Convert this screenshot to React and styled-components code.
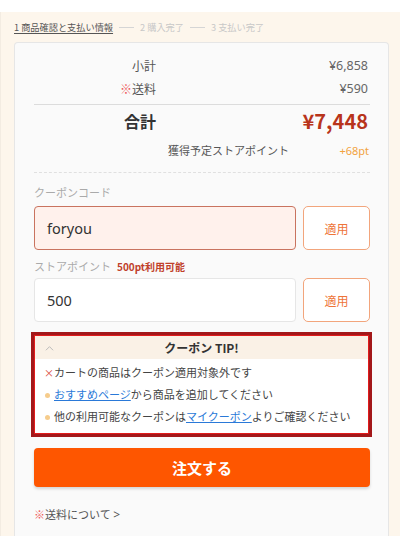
import React from "react";
import styled, { createGlobalStyle } from "styled-components";

const GlobalStyle = createGlobalStyle`
  html, body { margin: 0; padding: 0; background: #fff; }
  body { font-family: "Noto Sans CJK JP", "Noto Sans", sans-serif; color: #444; }
  * { box-sizing: border-box; }
`;

/* Checkout summary panel */
const App = () => {
  return <>
    <GlobalStyle />
    <Page>
      <Steps>
        <StepActive>1 商品確認と支払い情報</StepActive>
        <StepLine />
        <Step>2 購入完了</Step>
        <StepLine />
        <Step>3 支払い完了</Step>
      </Steps>
      <Card>
        <SumRow>
          <SumLabel>小計</SumLabel>
          <SumValue>¥6,858</SumValue>
        </SumRow>
        <SumRow>
          <SumLabel><Mark>※</Mark>送料</SumLabel>
          <SumValue>¥590</SumValue>
        </SumRow>
        <Divider />
        <TotalRow>
          <TotalLabel>合計</TotalLabel>
          <TotalValue>¥7,448</TotalValue>
        </TotalRow>
        <PointRow>
          <span>獲得予定ストアポイント</span>
          <PointValue>+68pt</PointValue>
        </PointRow>
        <Dashed />
        <FieldLabel>クーポンコード</FieldLabel>
        <FieldRow>
          <Input isError>foryou</Input>
          <ApplyButton>適用</ApplyButton>
        </FieldRow>
        <FieldLabel $tight>ストアポイント<Available>500pt利用可能</Available></FieldLabel>
        <FieldRow>
          <Input>500</Input>
          <ApplyButton>適用</ApplyButton>
        </FieldRow>
        <TipBox>
          <TipHeader>
            <Caret viewBox="0 0 10 6" width="9" height="6">
              <path d="M1 5.5 L5 1.5 L9 5.5" fill="none" stroke="#bbb" strokeWidth="1.1" />
            </Caret>
            クーポン TIP!
          </TipHeader>
          <TipList>
            <TipItem><Cross>×</Cross>カートの商品はクーポン適用対象外です</TipItem>
            <TipItem><Dot /><TipLink>おすすめページ</TipLink>から商品を追加してください</TipItem>
            <TipItem><Dot />他の利用可能なクーポンは<TipLink>マイクーポン</TipLink>よりご確認ください</TipItem>
          </TipList>
        </TipBox>
        <OrderButton>注文する</OrderButton>
        <Footnote><Mark>※</Mark>送料について <Arrow>&gt;</Arrow></Footnote>
      </Card>
    </Page>
  </>;
};

const Page = styled.div`
  margin-top: 12px;
  height: 524px;
  background: #fdf6ec;
  border-left: 1px solid #f3ece2;
  padding: 0 11px 0 13px;
  display: flex;
  flex-direction: column;
  overflow: hidden;
`;
const Steps = styled.div`
  height: 30px;
  display: flex;
  align-items: center;
  gap: 6px;
  font-size: 9.2px;
  color: #c8c8c8;
`;
const StepActive = styled.span`
  color: #555;
  text-decoration: underline;
  text-underline-offset: 2px;
`;
const Step = styled.span``;
const StepLine = styled.span`
  width: 15px;
  height: 1px;
  background: #d5d5d5;
`;
const Card = styled.div`
  flex: 1;
  background: #fafafa;
  border: 1px solid #e6e6e6;
  border-bottom: none;
  border-radius: 4px 4px 0 0;
  padding: 11px 18px 0 19px;
  display: flex;
  flex-direction: column;
`;
const SumRow = styled.div`
  height: 23px;
  display: flex;
  align-items: center;
  font-size: 12px;
  color: #555;
`;
const SumLabel = styled.span`
  width: 122px;
  text-align: right;
`;
const SumValue = styled.span`
  flex: 1;
  text-align: right;
  padding-right: 2px;
  font-family: "Noto Sans", sans-serif;
  font-size: 12.5px;
  color: #666;
`;
const Mark = styled.span`
  color: #ee5b5b;
`;
const Divider = styled.div`
  margin-top: 4px;
  height: 1px;
  background: #dcdcdc;
`;
const TotalRow = styled.div`
  height: 31px;
  display: flex;
  align-items: center;
`;
const TotalLabel = styled.span`
  width: 122px;
  text-align: right;
  font-size: 16px;
  font-weight: 700;
  color: #333;
`;
const TotalValue = styled.span`
  flex: 1;
  text-align: right;
  padding-right: 2px;
  font-size: 20px;
  font-weight: 700;
  color: #b8341b;
`;
const PointRow = styled.div`
  height: 28px;
  display: flex;
  align-items: center;
  justify-content: space-between;
  padding-left: 134px;
  padding-right: 1px;
  font-size: 11px;
  color: #555;
`;
const PointValue = styled.span`
  font-family: "Noto Sans", sans-serif;
  color: #f2a33e;
`;
const Dashed = styled.div`
  margin-top: 8px;
  border-top: 1px dashed #e0e0e0;
`;
const FieldLabel = styled.div`
  margin-top: ${(p) => p.$tight ? "9px" : "12px"};
  margin-bottom: ${(p) => p.$tight ? "5px" : "7px"};
  height: 14px;
  display: flex;
  align-items: center;
  font-size: 11px;
  color: #aaa;
`;
const Available = styled.span`
  margin-left: 6px;
  font-size: 10px;
  font-weight: 700;
  color: #c0402a;
`;
const FieldRow = styled.div`
  display: flex;
  gap: 7px;
`;
const Input = styled.div`
  flex: 1;
  height: 44px;
  display: flex;
  align-items: center;
  padding-left: 12px;
  font-family: "Noto Sans", sans-serif;
  font-size: 14.5px;
  color: #333;
  background: ${(p) => p.isError ? "#fff1ec" : "#fff"};
  border: 1px solid ${(p) => p.isError ? "#c9735f" : "#e6e6e6"};
  border-radius: 4px;
`;
const ApplyButton = styled.div`
  width: 67px;
  height: 44px;
  display: flex;
  align-items: center;
  justify-content: center;
  font-size: 12px;
  color: #ee7438;
  background: #fff;
  border: 1px solid #f2a57c;
  border-radius: 5px;
`;
const TipBox = styled.div`
  margin: 10px -2px 0 -3px;
  border: 3px solid #a3181a;
  box-shadow: inset 0 0 0 1px #e21b1b;
  background: #fff;
  padding: 1px;
`;
const TipHeader = styled.div`
  position: relative;
  height: 23px;
  display: flex;
  align-items: center;
  justify-content: center;
  background: #faf1e6;
  font-size: 12px;
  font-weight: 700;
  color: #333;
`;
const Caret = styled.svg`
  position: absolute;
  left: 10px;
  top: 9px;
`;
const TipList = styled.div`
  padding: 2px 0 6px 9px;
`;
const TipItem = styled.div`
  height: 22px;
  line-height: 22px;
  white-space: nowrap;
  font-size: 11px;
  color: #444;
`;
const Cross = styled.span`
  display: inline-block;
  width: 10px;
  font-size: 10px;
  color: #d9463a;
`;
const Dot = styled.span`
  display: inline-block;
  vertical-align: middle;
  width: 5px;
  height: 5px;
  margin: 0 4px 2px 1px;
  border-radius: 50%;
  background: #f6cc8c;
`;
const TipLink = styled.span`
  color: #2a79d8;
  text-decoration: underline;
`;
const OrderButton = styled.div`
  margin-top: 11px;
  height: 39px;
  display: flex;
  align-items: center;
  justify-content: center;
  background: #fe5600;
  border-radius: 4px;
  box-shadow: 0 2px 3px rgba(0, 0, 0, 0.15);
  color: #fff;
  font-size: 15px;
  font-weight: 700;
`;
const Footnote = styled.div`
  margin-top: 19px;
  font-size: 11px;
  color: #555;
`;
const Arrow = styled.span`
  font-family: "Noto Sans", sans-serif;
  font-size: 12px;
`;

export default App;
